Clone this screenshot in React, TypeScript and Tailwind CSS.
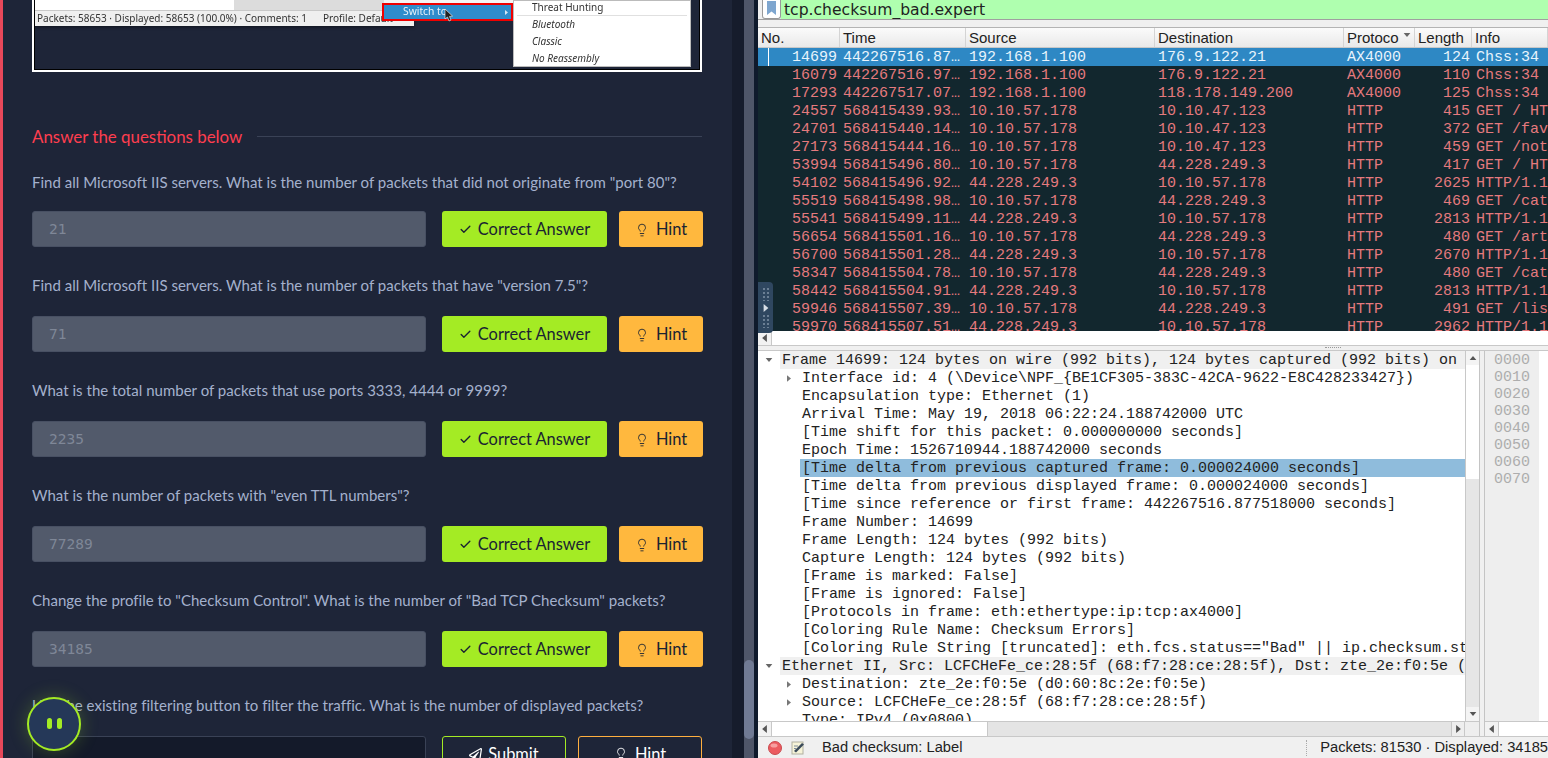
import React from "react";
import { Check, Lightbulb } from "lucide-react";
import { FaRegPaperPlane } from "react-icons/fa";

const UI = "font-['Lato','Noto_Sans',sans-serif]";

const questions = [
  { q: 'Find all Microsoft IIS servers. What is the number of packets that did not originate from "port 80"?', a: "21", gap: "mt-[19px]" },
  { q: 'Find all Microsoft IIS servers. What is the number of packets that have "version 7.5"?', a: "71", gap: "mt-[21px]" },
  { q: "What is the total number of packets that use ports 3333, 4444 or 9999?", a: "2235", gap: "mt-[21px]" },
  { q: 'What is the number of packets with "even TTL numbers"?', a: "77289", gap: "mt-[21px]" },
  { q: 'Change the profile to "Checksum Control". What is the number of "Bad TCP Checksum" packets?', a: "34185", gap: "mt-[21px]" },
];

const packets = [
  ["14699", "442267516.87…", "192.168.1.100", "176.9.122.21", "AX4000", "124", "Chss:34"],
  ["16079", "442267516.97…", "192.168.1.100", "176.9.122.21", "AX4000", "110", "Chss:34"],
  ["17293", "442267517.07…", "192.168.1.100", "118.178.149.200", "AX4000", "125", "Chss:34"],
  ["24557", "568415439.93…", "10.10.57.178", "10.10.47.123", "HTTP", "415", "GET / HT"],
  ["24701", "568415440.14…", "10.10.57.178", "10.10.47.123", "HTTP", "372", "GET /fav"],
  ["27173", "568415444.16…", "10.10.57.178", "10.10.47.123", "HTTP", "459", "GET /not"],
  ["53994", "568415496.80…", "10.10.57.178", "44.228.249.3", "HTTP", "417", "GET / HT"],
  ["54102", "568415496.92…", "44.228.249.3", "10.10.57.178", "HTTP", "2625", "HTTP/1.1"],
  ["55519", "568415498.98…", "10.10.57.178", "44.228.249.3", "HTTP", "469", "GET /cat"],
  ["55541", "568415499.11…", "44.228.249.3", "10.10.57.178", "HTTP", "2813", "HTTP/1.1"],
  ["56654", "568415501.16…", "10.10.57.178", "44.228.249.3", "HTTP", "480", "GET /art"],
  ["56700", "568415501.28…", "44.228.249.3", "10.10.57.178", "HTTP", "2670", "HTTP/1.1"],
  ["58347", "568415504.78…", "10.10.57.178", "44.228.249.3", "HTTP", "480", "GET /cat"],
  ["58442", "568415504.91…", "44.228.249.3", "10.10.57.178", "HTTP", "2813", "HTTP/1.1"],
  ["59946", "568415507.39…", "10.10.57.178", "44.228.249.3", "HTTP", "491", "GET /lis"],
  ["59970", "568415507.51…", "44.228.249.3", "10.10.57.178", "HTTP", "2962", "HTTP/1.1"],
];

type Line = { t: string; level: 0 | 1; open?: boolean; closed?: boolean; sel?: boolean };
const details: Line[] = [
  { t: "Frame 14699: 124 bytes on wire (992 bits), 124 bytes captured (992 bits) on interface", level: 0, open: true },
  { t: "Interface id: 4 (\\Device\\NPF_{BE1CF305-383C-42CA-9622-E8C428233427})", level: 1, closed: true },
  { t: "Encapsulation type: Ethernet (1)", level: 1 },
  { t: "Arrival Time: May 19, 2018 06:22:24.188742000 UTC", level: 1 },
  { t: "[Time shift for this packet: 0.000000000 seconds]", level: 1 },
  { t: "Epoch Time: 1526710944.188742000 seconds", level: 1 },
  { t: "[Time delta from previous captured frame: 0.000024000 seconds]", level: 1, sel: true },
  { t: "[Time delta from previous displayed frame: 0.000024000 seconds]", level: 1 },
  { t: "[Time since reference or first frame: 442267516.877518000 seconds]", level: 1 },
  { t: "Frame Number: 14699", level: 1 },
  { t: "Frame Length: 124 bytes (992 bits)", level: 1 },
  { t: "Capture Length: 124 bytes (992 bits)", level: 1 },
  { t: "[Frame is marked: False]", level: 1 },
  { t: "[Frame is ignored: False]", level: 1 },
  { t: "[Protocols in frame: eth:ethertype:ip:tcp:ax4000]", level: 1 },
  { t: "[Coloring Rule Name: Checksum Errors]", level: 1 },
  { t: '[Coloring Rule String [truncated]: eth.fcs.status=="Bad" || ip.checksum.status=="Bad"', level: 1 },
  { t: "Ethernet II, Src: LCFCHeFe_ce:28:5f (68:f7:28:ce:28:5f), Dst: zte_2e:f0:5e (d0:60:8c:2e:f0:5e)", level: 0, open: true },
  { t: "Destination: zte_2e:f0:5e (d0:60:8c:2e:f0:5e)", level: 1, closed: true },
  { t: "Source: LCFCHeFe_ce:28:5f (68:f7:28:ce:28:5f)", level: 1, closed: true },
  { t: "Type: IPv4 (0x0800)", level: 1 },
];

const Tri = ({ dir, className = "" }: { dir: "l" | "r" | "u" | "d"; className?: string }) => {
  const p = { l: "6,0 6,10 0,5", r: "0,0 0,10 6,5", u: "0,6 10,6 5,0", d: "0,0 10,0 5,6" }[dir];
  const box = dir === "l" || dir === "r" ? "0 0 6 10" : "0 0 10 6";
  const size = dir === "l" || dir === "r" ? { w: 6, h: 10 } : { w: 10, h: 6 };
  return (
    <svg width={size.w} height={size.h} viewBox={box} className={className}>
      <polygon points={p} fill="currentColor" />
    </svg>
  );
};

function Screenshot() {
  return (
    <div className="relative h-[72px] w-[670px] shrink-0 overflow-hidden border-x-2 border-b-2 border-white bg-[#1e2538]">
      <div className="h-full border-x border-b border-black" />
      {/* captured window */}
      <div className="absolute left-[1px] top-0 h-[26px] w-[379px] bg-[#efefef] shadow-[0_1px_3px_rgba(0,0,0,.5)] font-['Noto_Sans',sans-serif] text-[10px] text-[#333]">
        <div className="flex h-[11px] border-b border-[#c8c8c8]">
          <div className="w-[199px] bg-white" />
          <div className="flex-1 bg-[#dcdcdc]" />
        </div>
        <div className="flex h-[15px] items-center whitespace-nowrap pl-[2px] blur-[0.3px]">
          <span>Packets: 58653 · Displayed: 58653 (100.0%) · Comments: 1</span>
          <span className="ml-[16px]">Profile: Default</span>
        </div>
      </div>
      <div className="absolute left-[350px] top-0 h-[4px] w-[129px] bg-[#f4f4f4]" />
      <div className="absolute left-[348px] top-[3px] flex h-[18px] w-[131px] items-center justify-between border-2 border-[#f00000] bg-[#2f8ccb] pl-[19px] pr-[3px] font-['Noto_Sans',sans-serif] text-[10.3px] text-[#e8f2fa]">
        <span className="blur-[0.3px]">Switch to</span>
        <Tri dir="r" className="h-[5px] w-[3px] text-[#d8e8f4]" />
      </div>
      <svg className="absolute left-[410px] top-[9px]" width="9" height="13" viewBox="0 0 9 13">
        <path d="M1 0 L1 10 L3.5 8 L5 12 L7 11 L5.5 7.5 L8.5 7 Z" fill="#222" stroke="#fff" strokeWidth=".6" />
      </svg>
      <div className="absolute left-[479px] top-0 h-[67px] w-[178px] border border-[#bbb] bg-white font-['Noto_Sans',sans-serif] text-[10px] text-[#333]">
        <div className="pl-[18px] leading-[12px] blur-[0.3px]">Threat Hunting</div>
        <div className="mx-[3px] mt-[2px] h-[1px] bg-[#e0e0e0]" />
        <div className="pl-[18px] italic leading-[17px] blur-[0.3px]">Bluetooth</div>
        <div className="pl-[18px] italic leading-[17px] blur-[0.3px]">Classic</div>
        <div className="pl-[18px] italic leading-[17px] blur-[0.3px]">No Reassembly</div>
      </div>
    </div>
  );
}

function AnswerRow({ a }: { a: string }) {
  return (
    <div className="flex h-[36px] items-stretch">
      <div className="flex w-[394px] items-center rounded-[3px] border border-[#485063] bg-[#525a6b] pl-[16px] pt-[2px] font-['DejaVu_Sans_Mono',monospace] text-[14.5px] text-[#7f8797]">
        {a}
      </div>
      <div className="ml-[16px] flex w-[165px] items-center justify-center gap-[6px] rounded-[3px] bg-[#a4eb24] pt-[1px] text-[16.4px] text-[#1a2332]">
        <Check size={13} strokeWidth={2.5} />
        <span>Correct Answer</span>
      </div>
      <div className="ml-[12px] flex w-[84px] items-center justify-center gap-[7px] rounded-[3px] bg-[#ffb83e] pt-[1px] text-[16.4px] text-[#1a2332]">
        <Lightbulb size={14} strokeWidth={1.5} />
        <span>Hint</span>
      </div>
    </div>
  );
}

function LeftPanel() {
  return (
    <div className={`relative h-full w-[732px] shrink-0 overflow-hidden border-l-[3px] border-[#e8485a] bg-[#1e2538] pl-[29px] ${UI}`}>
      <Screenshot />
      <div className="mt-[55px] flex h-[20px] w-[670px] items-center">
        <span className="text-[16.9px] text-[#ff3e4f]">Answer the questions below</span>
        <div className="mb-[2px] ml-[15px] h-[1px] flex-1 bg-[#3a4256]" />
      </div>
      <div className="w-[671px]">
        {questions.map((item, i) => (
          <div key={i} className={i === 0 ? "mt-[25px]" : "mt-[28px]"}>
            <div className="h-[20px] whitespace-nowrap text-[15px] leading-[20px] tracking-[0.02px] text-[#a4b1cd]">{item.q}</div>
            <div className={item.gap}>
              <AnswerRow a={item.a} />
            </div>
          </div>
        ))}
        <div className="mt-[28px]">
          <div className="h-[20px] whitespace-nowrap text-[15px] leading-[20px] tracking-[0.02px] text-[#a4b1cd]">
            Use the existing filtering button to filter the traffic. What is the number of displayed packets?
          </div>
          <div className="mt-[21px] flex h-[36px]">
            <div className="w-[394px] rounded-[3px] border border-[#3a4256] bg-[#141a2a]" />
            <div className="ml-[16px] flex w-[124px] items-center justify-center gap-[6px] rounded-[3px] border border-[#a4eb24] text-[16.4px] text-white">
              <FaRegPaperPlane size={13} />
              <span>Submit</span>
            </div>
            <div className="ml-[12px] flex w-[124px] items-center justify-center gap-[7px] rounded-[3px] border border-[#ffaf3f] text-[16.4px] text-white">
              <Lightbulb size={14} strokeWidth={1.5} />
              <span>Hint</span>
            </div>
          </div>
        </div>
      </div>
      <div className="absolute left-[24px] top-[697px] flex h-[54px] w-[54px] items-center justify-center gap-[5px] rounded-full border-2 border-[#a4eb24] bg-[#253858] pb-[2px] shadow-[0_0_18px_rgba(164,235,36,.25)]">
        <span className="h-[11px] w-[5px] rounded-full bg-[#a4eb24]" />
        <span className="h-[11px] w-[5px] rounded-full bg-[#a4eb24]" />
      </div>
    </div>
  );
}

function Divider() {
  return (
    <div className="flex h-full w-[26px] shrink-0 bg-[#161c2c]">
      <div className="w-[12px]" />
      <div className="flex h-full w-[10px] flex-col bg-[#4f5669]">
        <div className="h-[660px]" />
        <div className="h-[79px] rounded-full bg-[#707a94]" />
      </div>
      <div className="w-[4px] bg-[#0f1a2c]" />
    </div>
  );
}

function PacketList() {
  const head = [
    ["No.", "w-[82px]"],
    ["Time", "w-[126px]"],
    ["Source", "w-[189px]"],
    ["Destination", "w-[189px]"],
    ["Protoco", "w-[71px]"],
    ["Length", "w-[57px]"],
    ["Info", "flex-1"],
  ];
  return (
    <div className="flex h-[303px] shrink-0 flex-col overflow-hidden bg-[#12272e]">
      <div className="flex h-[20px] shrink-0 border-b border-[#c8c8c8] bg-gradient-to-b from-[#fbfbfb] to-[#e9e9e9] font-['Liberation_Sans',sans-serif] text-[15px] leading-[20px] text-[#222]">
        {head.map(([t, w], i) => (
          <div key={t} className={`relative flex items-center whitespace-nowrap border-r border-[#d4d4d4] pl-[3px] pt-[1px] ${w}`}>
            {t}
            {i === 4 && <Tri dir="d" className="absolute right-[3px] top-[5px] h-[4px] w-[8px] text-[#666]" />}
          </div>
        ))}
      </div>
      <div className="font-['Liberation_Mono',monospace] text-[15px] leading-[20px] text-[#e57a7e]">
        {packets.map((r, i) => (
          <div key={r[0]} className={`relative flex h-[18px] whitespace-nowrap ${i === 0 ? "bg-[#2e88c4] text-[#e8f4fc]" : ""}`}>
            {i === 0 && <div className="absolute left-[10px] top-0 h-[18px] w-[1px] bg-white" />}
            <div className="w-[81px] pr-[2px] text-right">{r[0]}</div>
            <div className="w-[126px] pl-[4px]">{r[1]}</div>
            <div className="w-[189px] pl-[4px]">{r[2]}</div>
            <div className="w-[189px] pl-[4px]">{r[3]}</div>
            <div className="w-[71px] pl-[4px]">{r[4]}</div>
            <div className="w-[57px] pr-[1px] text-right">{r[5]}</div>
            <div className="flex-1 overflow-hidden pl-[5px]">{r[6]}</div>
          </div>
        ))}
      </div>
    </div>
  );
}

function DetailsPane() {
  return (
    <div className="flex min-h-0 flex-1">
      <div className="flex w-[722px] flex-col border-r border-[#c4c4c4]">
        <div className="flex min-h-0 flex-1">
          <div className="min-w-0 flex-1 overflow-hidden bg-white font-['Liberation_Mono',monospace] text-[15px] leading-[20px] text-[#222]">
            {details.map((d) => (
              <div key={d.t} className="relative flex h-[18px] whitespace-nowrap">
                <div className={`flex h-[18px] shrink-0 items-center justify-center ${d.level === 0 ? "w-[22px]" : "w-[42px] pl-[20px]"}`}>
                  {d.open && <Tri dir="d" className="h-[4px] w-[8px] text-[#666]" />}
                  {d.closed && <Tri dir="r" className="h-[7px] w-[4px] text-[#777]" />}
                </div>
                <div className={`h-[18px] min-w-0 flex-1 overflow-hidden pl-[2px] ${d.level === 0 ? "bg-[#f0f0f0]" : ""} ${d.sel ? "bg-[#8fbcdc]" : ""}`}>{d.t}</div>
              </div>
            ))}
          </div>
          <div className="flex w-[14px] shrink-0 flex-col border-l border-[#c8c8c8] bg-[#e6e6e6]">
            <div className="flex h-[14px] items-center justify-center bg-[#f4f4f4]">
              <Tri dir="u" className="h-[4px] w-[8px] text-[#555]" />
            </div>
            <div className="h-[114px] bg-white" />
            <div className="flex-1" />
            <div className="flex h-[14px] items-center justify-center bg-[#f4f4f4]">
              <Tri dir="d" className="h-[4px] w-[8px] text-[#555]" />
            </div>
          </div>
        </div>
        <div className="flex h-[15px] border-t border-[#c8c8c8] bg-[#e4e4e4]">
          <div className="flex w-[14px] items-center justify-center border-r border-[#c8c8c8] bg-[#f2f2f2]">
            <Tri dir="l" className="h-[8px] w-[5px] text-[#555]" />
          </div>
          <div className="w-[216px] border-r border-[#c8c8c8] bg-white" />
          <div className="flex-1" />
          <div className="flex w-[14px] items-center justify-center border-x border-[#c8c8c8] bg-[#eee]">
            <Tri dir="r" className="h-[8px] w-[5px] text-[#555]" />
          </div>
          <div className="w-[14px] bg-[#eee]" />
        </div>
      </div>
      <div className="w-[4px] bg-[#f0f0f0]" />
      <div className="flex min-w-0 flex-1 flex-col border-l border-[#c4c4c4]">
        <div className="flex min-h-0 flex-1 bg-white">
          <div className="w-[54px] bg-[#eeeeee] pl-[9px] pt-[1px] font-['Liberation_Mono',monospace] text-[15px] leading-[17px] text-[#adadad]">
            {["0000", "0010", "0020", "0030", "0040", "0050", "0060", "0070"].map((o) => (
              <div key={o}>{o}</div>
            ))}
          </div>
        </div>
        <div className="flex h-[15px] border-t border-[#c8c8c8] bg-[#e4e4e4]">
          <div className="flex w-[14px] items-center justify-center border-r border-[#c8c8c8] bg-[#f2f2f2]">
            <Tri dir="l" className="h-[8px] w-[5px] text-[#555]" />
          </div>
          <div className="flex-1 bg-white" />
        </div>
      </div>
    </div>
  );
}

function RightPanel() {
  return (
    <div className="relative flex h-full min-w-0 flex-1 flex-col overflow-hidden bg-[#f0f0f0]">
      {/* display filter */}
      <div className="flex h-[20px] shrink-0 border-b border-[#a0a0a0] pl-[4px]">
        <div className="flex w-[19px] justify-center rounded-b-[3px] border-x border-b border-[#999] bg-white">
          <svg width="9" height="15" viewBox="0 0 9 15">
            <path d="M0 1 H9 V15 L4.5 11.5 L0 15 Z" fill="#7ea6cf" />
          </svg>
        </div>
        <div className="flex-1 overflow-hidden bg-[#afffaf] pl-[3px] font-['DejaVu_Sans',sans-serif] text-[15.6px] leading-[21px] text-[#222]">tcp.checksum_bad.expert</div>
      </div>
      <div className="h-[8px] shrink-0 border-b border-[#b4b4b4]" />
      <PacketList />
      {/* packet list horizontal scrollbar */}
      <div className="flex h-[15px] shrink-0 items-stretch border-b border-[#c8c8c8] bg-white">
        <div className="flex w-[14px] items-center justify-center border-r border-[#c8c8c8] bg-[#f2f2f2]">
          <Tri dir="l" className="h-[8px] w-[5px] text-[#555]" />
        </div>
      </div>
      {/* sash */}
      <div className="relative h-[5px] shrink-0 border-b border-[#c8c8c8] bg-[#f0f0f0]">
        <div className="absolute left-[567px] top-[1px] h-[1px] w-[16px] border-t border-dotted border-[#999]" />
      </div>
      <DetailsPane />
      {/* status bar */}
      <div className="flex h-[22px] shrink-0 items-center border-t border-[#c8c8c8] bg-[#f0f0f0] font-['Liberation_Sans',sans-serif] text-[14.7px] text-[#222]">
        <svg className="ml-[10px]" width="14" height="14" viewBox="0 0 14 14">
          <circle cx="7" cy="7" r="6.5" fill="#ec5b60" stroke="#c94a4e" />
          <ellipse cx="6" cy="4.5" rx="3.5" ry="2" fill="#f79fa0" />
        </svg>
        <svg className="ml-[9px]" width="14" height="14" viewBox="0 0 14 14">
          <rect x="1" y="1" width="11" height="12" fill="#f6f3d8" stroke="#b0b0a0" />
          <path d="M3 10 L11 2 L13 3.5 L5 11.5 Z" fill="#3a4a5a" />
          <path d="M3 5 H7 M3 7.5 H5" stroke="#7a8a9a" />
        </svg>
        <span className="ml-[17px]">Bad checksum: Label</span>
        <div className="ml-auto mr-[13px] h-[16px] w-[1px] border-l border-dotted border-[#aaa]" />
        <span className="whitespace-nowrap">Packets: 81530 · Displayed: 34185</span>
      </div>
      {/* floating handle */}
      <div className="absolute left-0 top-[282px] flex h-[51px] w-[15px] flex-col items-center justify-between rounded-r-[4px] bg-[#2f4760] py-[5px]">
        <div className="h-[14px] w-[7px] bg-[radial-gradient(#6b7f94_1px,transparent_1px)] bg-[length:4px_4px]" />
        <Tri dir="r" className="h-[8px] w-[6px] text-[#d8dee6]" />
        <div className="h-[14px] w-[7px] bg-[radial-gradient(#6b7f94_1px,transparent_1px)] bg-[length:4px_4px]" />
      </div>
    </div>
  );
}

export default function App() {
  return (
    <div className="flex h-[758px] w-[1548px] overflow-hidden">
      <LeftPanel />
      <Divider />
      <RightPanel />
    </div>
  );
}
